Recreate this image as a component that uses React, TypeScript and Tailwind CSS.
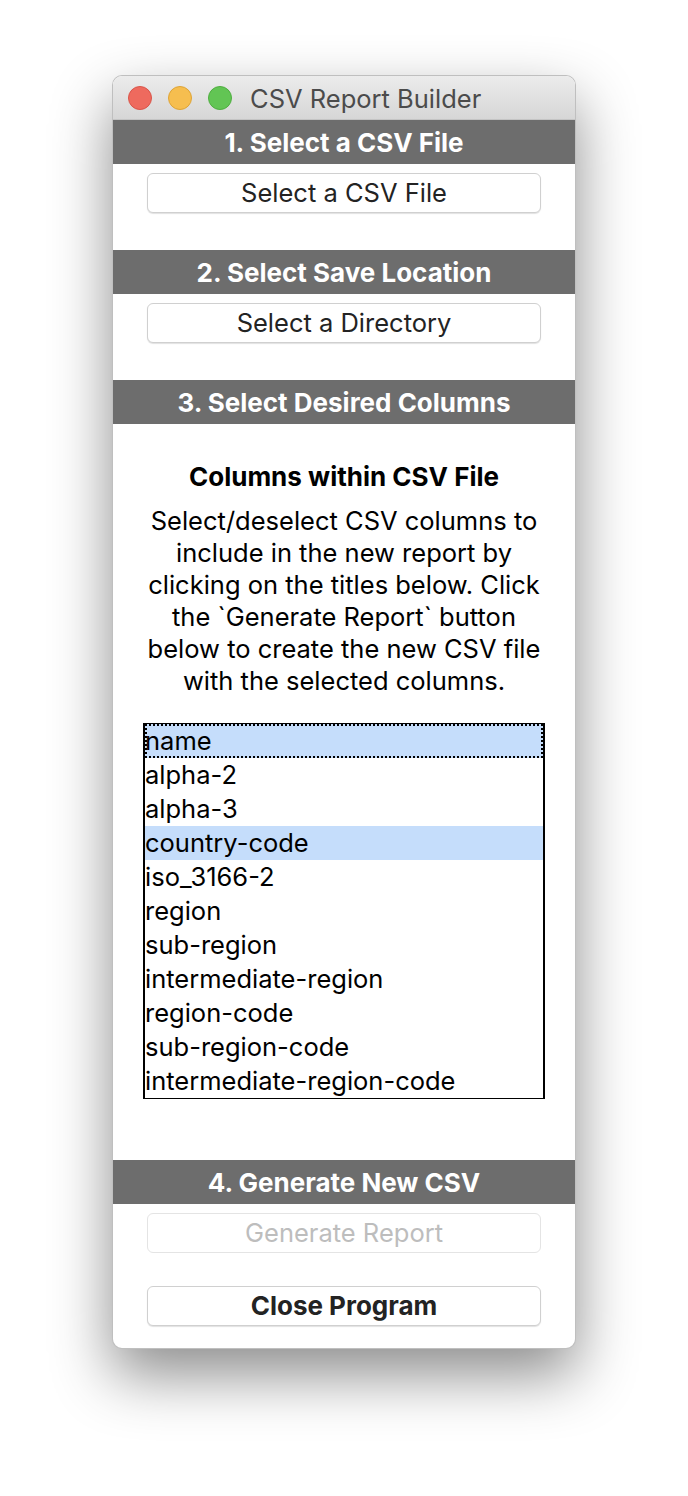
import React from 'react'

const columns = [
  'name',
  'alpha-2',
  'alpha-3',
  'country-code',
  'iso_3166-2',
  'region',
  'sub-region',
  'intermediate-region',
  'region-code',
  'sub-region-code',
  'intermediate-region-code',
]

const selected = ['name', 'country-code']

function SectionHeader({ children }: { children: React.ReactNode }) {
  return (
    <div className="h-[44px] pt-[2px] bg-[#6d6d6d] flex items-center justify-center text-white font-bold text-[26px] leading-none">
      {children}
    </div>
  )
}

function MacButton({
  children,
  disabled,
  bold,
}: {
  children: React.ReactNode
  disabled?: boolean
  bold?: boolean
}) {
  return (
    <button
      className={`mx-auto block w-[394px] h-[40px] rounded-[6px] bg-white border leading-none ${
        disabled
          ? 'text-[#bdbdbd] border-[#e4e4e4]'
          : 'text-[#232323] border-[#d0d0d0] shadow-[0_1px_1px_rgba(0,0,0,0.12)]'
      } ${bold ? 'font-bold text-[26px]' : 'text-[25.5px]'}`}
    >
      {children}
    </button>
  )
}

export default function App() {
  return (
    <div
      className="min-h-screen bg-white pt-[75px] pb-[149px]"
      style={{ fontFamily: 'Inter, "Noto Sans", sans-serif' }}
    >
      <div className="mx-auto w-[464px] rounded-[10px] overflow-hidden bg-white border border-black/25 shadow-[0_26px_60px_rgba(0,0,0,0.45)]">
        {/* Title bar */}
        <div className="h-[44px] bg-gradient-to-b from-[#ececec] to-[#d6d6d6] border-b border-[#c4c4c4] flex items-center pl-[15px]">
          <div className="flex gap-[16px]">
            <span className="w-[24px] h-[24px] rounded-full bg-[#ee6a5e] border border-[#d9554a]" />
            <span className="w-[24px] h-[24px] rounded-full bg-[#f6be4f] border border-[#dea437]" />
            <span className="w-[24px] h-[24px] rounded-full bg-[#62c554] border border-[#4fae40]" />
          </div>
          <span className="ml-[18px] pt-[2px] text-[25.5px] leading-none text-[#4b4b4b]">CSV Report Builder</span>
        </div>

        {/* 1 */}
        <SectionHeader>1. Select a CSV File</SectionHeader>
        <div className="pt-[9px] pb-[37px]">
          <MacButton>Select a CSV File</MacButton>
        </div>

        {/* 2 */}
        <SectionHeader>2. Select Save Location</SectionHeader>
        <div className="pt-[9px] pb-[37px]">
          <MacButton>Select a Directory</MacButton>
        </div>

        {/* 3 */}
        <SectionHeader>3. Select Desired Columns</SectionHeader>
        <div className="pt-[37px] pb-[61px] text-black">
          <h2 className="text-center font-bold text-[26px] leading-[32px]">Columns within CSV File</h2>
          <p className="mt-[12px] text-center text-[25.5px] leading-[32px] px-[28px]">
            Select/deselect CSV columns to include in the new report by clicking on the titles below. Click the
            `Generate Report` button below to create the new CSV file with the selected columns.
          </p>
          <div className="mx-auto mt-[26px] w-[402px] border-x-2 border-y border-black">
            {columns.map((col, i) => (
              <div
                key={col}
                className={`h-[34px] flex items-center text-[25.5px] leading-none ${
                  selected.includes(col) ? 'bg-[#c5ddfb]' : ''
                } ${i === 0 ? 'outline-2 outline-dotted outline-black -outline-offset-2' : ''}`}
              >
                {col}
              </div>
            ))}
          </div>
        </div>

        {/* 4 */}
        <SectionHeader>4. Generate New CSV</SectionHeader>
        <div className="pt-[9px] pb-[22px] flex flex-col gap-[33px]">
          <MacButton disabled>Generate Report</MacButton>
          <MacButton bold>Close Program</MacButton>
        </div>
      </div>
    </div>
  )
}
